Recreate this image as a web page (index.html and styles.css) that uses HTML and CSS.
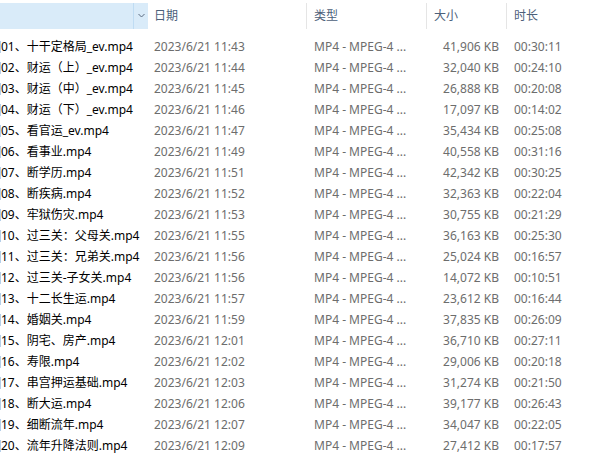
FILE: index.html
```html
<!DOCTYPE html>
<html lang="zh-CN">
<head>
<meta charset="utf-8">
<link rel="stylesheet" href="styles.css">
</head>
<body>
<div class="view">
  <div class="header">
    <div class="hcell hname">
      <span class="hname-fill"></span>
      <span class="split"></span>
      <span class="drop"><svg width="7" height="5" viewBox="0 0 7 5"><path d="M0.5 1 L3.5 4 L6.5 1" fill="none" stroke="#5a6b80" stroke-width="1"/></svg></span>
    </div>
    <div class="hcell hdate">日期</div>
    <div class="hcell hsep">类型</div>
    <div class="hcell hsep">大小</div>
    <div class="hcell hsep">时长</div>
  </div>
  <div class="rows">
    <div class="row"><span class="c name">01、十干定格局_ev.mp4</span><span class="c date">2023/6/21 11:43</span><span class="c type">MP4 - MPEG-4 ...</span><span class="c size">41,906 KB</span><span class="c dur">00:30:11</span></div>
    <div class="row"><span class="c name">02、财运（上）_ev.mp4</span><span class="c date">2023/6/21 11:44</span><span class="c type">MP4 - MPEG-4 ...</span><span class="c size">32,040 KB</span><span class="c dur">00:24:10</span></div>
    <div class="row"><span class="c name">03、财运（中）_ev.mp4</span><span class="c date">2023/6/21 11:45</span><span class="c type">MP4 - MPEG-4 ...</span><span class="c size">26,888 KB</span><span class="c dur">00:20:08</span></div>
    <div class="row"><span class="c name">04、财运（下）_ev.mp4</span><span class="c date">2023/6/21 11:46</span><span class="c type">MP4 - MPEG-4 ...</span><span class="c size">17,097 KB</span><span class="c dur">00:14:02</span></div>
    <div class="row"><span class="c name">05、看官运_ev.mp4</span><span class="c date">2023/6/21 11:47</span><span class="c type">MP4 - MPEG-4 ...</span><span class="c size">35,434 KB</span><span class="c dur">00:25:08</span></div>
    <div class="row"><span class="c name">06、看事业.mp4</span><span class="c date">2023/6/21 11:49</span><span class="c type">MP4 - MPEG-4 ...</span><span class="c size">40,558 KB</span><span class="c dur">00:31:16</span></div>
    <div class="row"><span class="c name">07、断学历.mp4</span><span class="c date">2023/6/21 11:51</span><span class="c type">MP4 - MPEG-4 ...</span><span class="c size">42,342 KB</span><span class="c dur">00:30:25</span></div>
    <div class="row"><span class="c name">08、断疾病.mp4</span><span class="c date">2023/6/21 11:52</span><span class="c type">MP4 - MPEG-4 ...</span><span class="c size">32,363 KB</span><span class="c dur">00:22:04</span></div>
    <div class="row"><span class="c name">09、牢狱伤灾.mp4</span><span class="c date">2023/6/21 11:53</span><span class="c type">MP4 - MPEG-4 ...</span><span class="c size">30,755 KB</span><span class="c dur">00:21:29</span></div>
    <div class="row"><span class="c name">10、过三关：父母关.mp4</span><span class="c date">2023/6/21 11:55</span><span class="c type">MP4 - MPEG-4 ...</span><span class="c size">36,163 KB</span><span class="c dur">00:25:30</span></div>
    <div class="row"><span class="c name">11、过三关：兄弟关.mp4</span><span class="c date">2023/6/21 11:56</span><span class="c type">MP4 - MPEG-4 ...</span><span class="c size">25,024 KB</span><span class="c dur">00:16:57</span></div>
    <div class="row"><span class="c name">12、过三关-子女关.mp4</span><span class="c date">2023/6/21 11:56</span><span class="c type">MP4 - MPEG-4 ...</span><span class="c size">14,072 KB</span><span class="c dur">00:10:51</span></div>
    <div class="row"><span class="c name">13、十二长生运.mp4</span><span class="c date">2023/6/21 11:57</span><span class="c type">MP4 - MPEG-4 ...</span><span class="c size">23,612 KB</span><span class="c dur">00:16:44</span></div>
    <div class="row"><span class="c name">14、婚姻关.mp4</span><span class="c date">2023/6/21 11:59</span><span class="c type">MP4 - MPEG-4 ...</span><span class="c size">37,835 KB</span><span class="c dur">00:26:09</span></div>
    <div class="row"><span class="c name">15、阴宅、房产.mp4</span><span class="c date">2023/6/21 12:01</span><span class="c type">MP4 - MPEG-4 ...</span><span class="c size">36,710 KB</span><span class="c dur">00:27:11</span></div>
    <div class="row"><span class="c name">16、寿限.mp4</span><span class="c date">2023/6/21 12:02</span><span class="c type">MP4 - MPEG-4 ...</span><span class="c size">29,006 KB</span><span class="c dur">00:20:18</span></div>
    <div class="row"><span class="c name">17、串宫押运基础.mp4</span><span class="c date">2023/6/21 12:03</span><span class="c type">MP4 - MPEG-4 ...</span><span class="c size">31,274 KB</span><span class="c dur">00:21:50</span></div>
    <div class="row"><span class="c name">18、断大运.mp4</span><span class="c date">2023/6/21 12:06</span><span class="c type">MP4 - MPEG-4 ...</span><span class="c size">39,177 KB</span><span class="c dur">00:26:43</span></div>
    <div class="row"><span class="c name">19、细断流年.mp4</span><span class="c date">2023/6/21 12:07</span><span class="c type">MP4 - MPEG-4 ...</span><span class="c size">34,047 KB</span><span class="c dur">00:22:05</span></div>
    <div class="row"><span class="c name">20、流年升降法则.mp4</span><span class="c date">2023/6/21 12:09</span><span class="c type">MP4 - MPEG-4 ...</span><span class="c size">27,412 KB</span><span class="c dur">00:17:57</span></div>
  </div>
</div>
</body>
</html>
```

FILE: styles.css
```css
html, body {
  margin: 0;
  padding: 0;
  background: #ffffff;
}
body {
  width: 589px;
  height: 460px;
  overflow: hidden;
  font-family: "Noto Sans", "Noto Sans CJK SC", sans-serif;
  font-size: 12px;
}
.view {
  padding-top: 3px;
}
.header,
.row {
  display: grid;
  grid-template-columns: 148px 159px 120px 80px 82px;
}
.header {
  height: 26px;
  color: #4c607a;
}
.hcell {
  display: flex;
  align-items: center;
  line-height: 26px;
}
.hname {
  background: #d9ebf9;
}
.hname-fill {
  flex: 1;
}
.split {
  width: 1px;
  align-self: stretch;
  background: #bfdcf3;
}
.drop {
  width: 14px;
  display: flex;
  justify-content: center;
  align-items: center;
  padding-bottom: 1px;
}
.hdate {
  padding-left: 6px;
}
.hsep {
  padding-left: 7px;
  border-left: 1px solid #e5e5e5;
  margin-left: -1px;
}
.rows {
  padding-top: 7px;
}
.row {
  height: 21px;
  line-height: 21px;
  color: #6d6d6d;
}
.c {
  white-space: nowrap;
  overflow: hidden;
}
.name {
  color: #000000;
  display: flex;
  align-items: center;
}
.name::before {
  content: "";
  width: 1px;
  height: 12px;
  background: #b5cfe9;
  flex: none;
}
.date {
  padding-left: 6px;
}
.type {
  padding-left: 7px;
}
.size {
  text-align: right;
  padding-right: 8px;
}
.dur {
  padding-left: 7px;
}
```
